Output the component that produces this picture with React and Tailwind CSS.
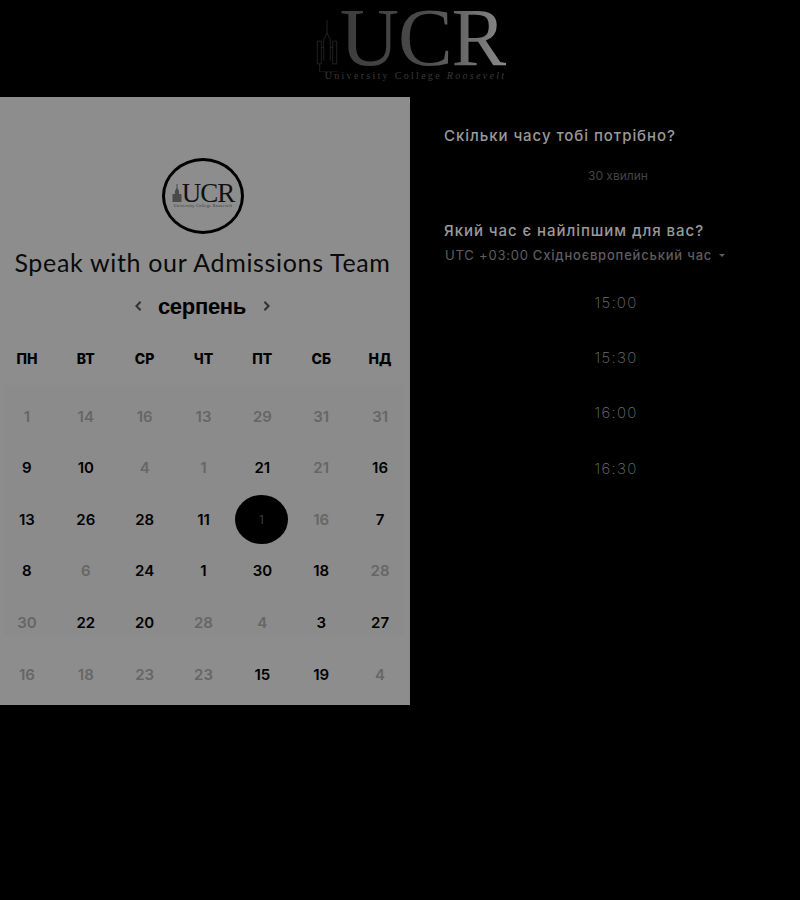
const weekDays = ["ПН", "ВТ", "СР", "ЧТ", "ПТ", "СБ", "НД"];

// d = day number, on = bookable day (dark text)
const weeks = [
  [{ d: 1 }, { d: 14 }, { d: 16 }, { d: 13 }, { d: 29 }, { d: 31 }, { d: 31 }],
  [{ d: 9, on: true }, { d: 10, on: true }, { d: 4 }, { d: 1 }, { d: 21, on: true }, { d: 21 }, { d: 16, on: true }],
  [{ d: 13, on: true }, { d: 26, on: true }, { d: 28, on: true }, { d: 11, on: true }, { d: 1, selected: true }, { d: 16 }, { d: 7, on: true }],
  [{ d: 8, on: true }, { d: 6 }, { d: 24, on: true }, { d: 1, on: true }, { d: 30, on: true }, { d: 18, on: true }, { d: 28 }],
  [{ d: 30 }, { d: 22, on: true }, { d: 20, on: true }, { d: 28 }, { d: 4 }, { d: 3, on: true }, { d: 27, on: true }],
];
const lastWeek = [{ d: 16 }, { d: 18 }, { d: 23 }, { d: 23 }, { d: 15, on: true }, { d: 19, on: true }, { d: 4 }];

const times = ["15:00", "15:30", "16:00", "16:30"];

const Tower = ({ className, stroke }) => (
  <svg viewBox="0 0 26 64" className={className} fill="none" stroke={stroke} strokeWidth="1">
    <path d="M13 0V16M9 24L13 16L17 24V50M9 24V50" />
    <path d="M1 26H6V54H1ZM20 26H25V54H20Z" />
    <path d="M6 34H9M17 34H20M4 54V64H26" />
  </svg>
);

const SmallTower = () => (
  <svg viewBox="0 0 10 18" className="mb-[1px] h-[18px] w-[10px]" fill="#4a4a4a">
    <path d="M4.5 0H5.5V4L7 7V10H9.5V18H0.5V10H3V7L4.5 4Z" />
  </svg>
);

const DayCell = ({ day }) => (
  <div className="flex h-[51.5px] items-center justify-center">
    {day.selected ? (
      <div className="mr-[2px] flex h-[49px] w-[53px] items-center justify-center rounded-[50%] bg-black text-[12px] font-light text-[#4a4a4a]">
        {day.d}
      </div>
    ) : (
      <span className={day.on ? "text-black" : "text-[#666666]"}>{day.d}</span>
    )}
  </div>
);

export default function App() {
  return (
    <div className="min-h-[900px] bg-black font-['Inter',sans-serif]">
      {/* Header logo */}
      <div className="flex h-[97px] justify-center pl-[20px]">
        <div className="flex flex-col items-end pt-[2px]">
          <div className="flex items-end">
            <Tower className="mb-[2px] h-[52px] w-[26px]" stroke="#2a2a2a" />
            <span className="bg-gradient-to-r from-[#3c3c3c] via-[#4a4a4a] to-[#8a8a8a] bg-clip-text pr-[1px] font-['Liberation_Serif',serif] text-[82px] leading-[72px] tracking-[-1px] text-transparent">
              UCR
            </span>
          </div>
          <span className="-mt-[4px] font-['Liberation_Serif',serif] text-[10px] leading-[12px] tracking-[2.3px] text-[#3a3a3a]">
            University College <span className="italic">Roosevelt</span>
          </span>
        </div>
      </div>

      <div className="flex">
        {/* Calendar panel */}
        <div className="flex h-[608px] w-[410px] flex-col bg-[#8d8d8d]">
          <div className="mt-[61px] ml-[162px] flex h-[76px] w-[82px] flex-col items-center justify-center rounded-[50%] border-[3px] border-black">
            <div className="flex items-end">
              <SmallTower />
              <span className="font-['Liberation_Serif',serif] text-[27px] leading-[20px] tracking-[-1px] text-[#111]">
                UCR
              </span>
            </div>
            <span className="font-['Liberation_Serif',serif] text-[4px] leading-[6px] tracking-[0.4px] text-[#333]">
              University College Roosevelt
            </span>
          </div>

          <h1 className="mt-[10px] pr-[5px] text-center font-['Lato',sans-serif] text-[25px] leading-[36px] font-normal tracking-[0.67px] whitespace-nowrap text-[#0a0a0a]">
            Speak with our Admissions Team
          </h1>

          <div className="mt-[10px] flex h-[32px] items-center justify-center pr-[5px]">
            <svg viewBox="0 0 8 12" className="h-[10px] w-[7px]" fill="none" stroke="#333" strokeWidth="2.5">
              <path d="M6.5 1L1.5 6L6.5 11" />
            </svg>
            <span className="mr-[17px] ml-[16px] font-['Liberation_Sans',sans-serif] text-[22px] font-bold tracking-[-0.3px] text-black">
              серпень
            </span>
            <svg viewBox="0 0 8 12" className="h-[10px] w-[7px]" fill="none" stroke="#333" strokeWidth="2.5">
              <path d="M1.5 1L6.5 6L1.5 11" />
            </svg>
          </div>

          <div className="mt-[21px] ml-[-2.5px] grid h-[30px] w-[412px] grid-cols-7 items-center text-center text-[14px] font-extrabold text-black">
            {weekDays.map((name) => (
              <span key={name}>{name}</span>
            ))}
          </div>

          <div className="mt-[12px] mr-[6px] ml-[4px] h-[252px] bg-[#8b8b8b] pt-[6px]">
            <div className="ml-[-6.5px] grid w-[412px] grid-cols-7 text-center text-[15px] font-semibold">
              {weeks.flat().map((day, i) => (
                <DayCell key={i} day={day} />
              ))}
            </div>
          </div>
          <div className="ml-[-2.5px] grid w-[412px] grid-cols-7 pt-[12px] text-center text-[15px] font-semibold">
            {lastWeek.map((day, i) => (
              <DayCell key={i} day={day} />
            ))}
          </div>
        </div>

        {/* Time panel */}
        <div className="w-[390px] pt-[28px] pl-[34px]">
          <h2 className="text-[15px] leading-[22px] font-medium tracking-[0.95px] text-[#9a9a9a]">
            Скільки часу тобі потрібно?
          </h2>
          <p className="mt-[20px] pl-[144px] text-[12px] leading-[18px] text-[#444]">30 хвилин</p>
          <h2 className="mt-[35px] text-[15px] leading-[22px] font-medium tracking-[0.95px] text-[#9a9a9a]">
            Який час є найліпшим для вас?
          </h2>
          <div className="mt-[3px] flex items-center pl-[1px] text-[13px] leading-[20px] tracking-[0.8px] text-[#5e5e5e]">
            <span>UTC +03:00</span>
            <span className="ml-[4px] font-medium">Східноєвропейський час</span>
            <span className="ml-[7px] h-0 w-0 border-x-[3.5px] border-t-[3.5px] border-x-transparent border-t-[#5e5e5e]" />
          </div>
          <div className="mt-[10.5px] flex flex-col">
            {times.map((time) => (
              <div key={time} className="flex h-[55.3px] items-center justify-center pr-[12px] text-[15px] font-extralight tracking-[1.3px] text-[#707070]">
                {time}
              </div>
            ))}
          </div>
        </div>
      </div>
    </div>
  );
}
